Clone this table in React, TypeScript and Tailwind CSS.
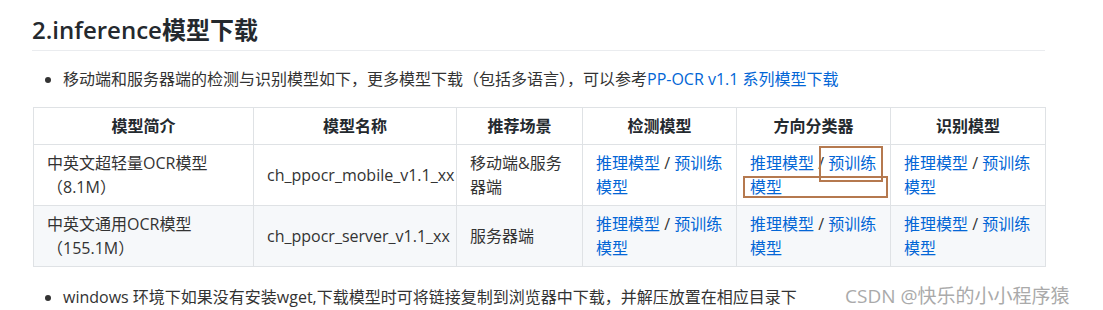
import React from 'react';

const Link: React.FC<{ children: React.ReactNode }> = ({ children }) => (
    <a className="text-[#0366d6] no-underline">{children}</a>
);

const Links = () => (
    <>
        <Link>推理模型</Link> / <Link>预训练<br />模型</Link>
    </>
);

const rows = [
    { intro: ['中英文超轻量OCR模型', '（8.1M）'], name: 'ch_ppocr_mobile_v1.1_xx', scene: ['移动端&服务', '器端'] },
    { intro: ['中英文通用OCR模型', '（155.1M）'], name: 'ch_ppocr_server_v1.1_xx', scene: ['服务器端'] },
];

const headers = ['模型简介', '模型名称', '推荐场景', '检测模型', '方向分类器', '识别模型'];

export default function App() {
    return (
        <div className="relative w-[1103px] h-[310px] overflow-hidden bg-white text-[#333] font-['Open_Sans','Noto_Sans_CJK_SC',sans-serif]">
            <div className="ml-[32px] w-[1013px]">
                {/* Heading */}
                <h2 className="pt-[15px] pb-[5px] text-[24px] leading-[30px] font-semibold text-[#24292e] border-b border-[#eaecef]">
                    2.inference<span className="font-bold">模型下载</span>
                </h2>

                <ul className="mt-[16px] pl-[31px] list-disc text-[16px] leading-[24px] marker:text-[#333]">
                    <li>
                        移动端和服务器端的检测与识别模型如下，更多模型下载（包括多语言），可以参考<Link>PP-OCR v1.1 系列模型下载</Link>
                    </li>
                </ul>

                {/* Table */}
                <table className="mt-[16px] ml-[1px] w-[1012px] table-fixed border-collapse text-[16px] leading-[24px]">
                    <colgroup>
                        <col className="w-[220px]" />
                        <col className="w-[203px]" />
                        <col className="w-[126px]" />
                        <col className="w-[154px]" />
                        <col className="w-[154px]" />
                        <col className="w-[155px]" />
                    </colgroup>
                    <thead>
                        <tr className="bg-white">
                            {headers.map(h => (
                                <th key={h} className="border border-[#dfe2e5] px-[13px] py-[6px] font-bold text-center text-[#24292e]">
                                    {h}
                                </th>
                            ))}
                        </tr>
                    </thead>
                    <tbody>
                        {rows.map((r, i) => (
                            <tr key={r.name} className={i % 2 === 1 ? 'bg-[#f6f8fa]' : 'bg-white'}>
                                <td className="border border-[#dfe2e5] px-[13px] py-[6px] align-middle">
                                    {r.intro[0]}<br />{r.intro[1]}
                                </td>
                                <td className="border border-[#dfe2e5] px-[13px] py-[6px] align-middle">{r.name}</td>
                                <td className="border border-[#dfe2e5] px-[13px] py-[6px] align-middle">
                                    {r.scene[0]}
                                    {r.scene[1] && <><br />{r.scene[1]}</>}
                                </td>
                                <td className="border border-[#dfe2e5] px-[13px] py-[6px] align-middle"><Links /></td>
                                <td className="border border-[#dfe2e5] px-[13px] py-[6px] align-middle"><Links /></td>
                                <td className="border border-[#dfe2e5] px-[13px] py-[6px] align-middle"><Links /></td>
                            </tr>
                        ))}
                    </tbody>
                </table>

                <ul className="mt-[18px] pl-[31px] list-disc text-[16px] leading-[24px] marker:text-[#333]">
                    <li>windows 环境下如果没有安装wget,下载模型时可将链接复制到浏览器中下载，并解压放置在相应目录下</li>
                </ul>
            </div>

            {/* annotation boxes */}
            <div className="absolute left-[819px] top-[146px] w-[64px] h-[36px] border-2 border-[#b5794f]" />
            <div className="absolute left-[743px] top-[176px] w-[145px] h-[22px] border-2 border-[#b5794f]" />

            {/* watermark */}
            <div className="absolute left-[845px] top-[283px] text-[19px] leading-[26px] text-[#aaa] whitespace-nowrap">
                CSDN @快乐的小小程序猿
            </div>
        </div>
    );
}
